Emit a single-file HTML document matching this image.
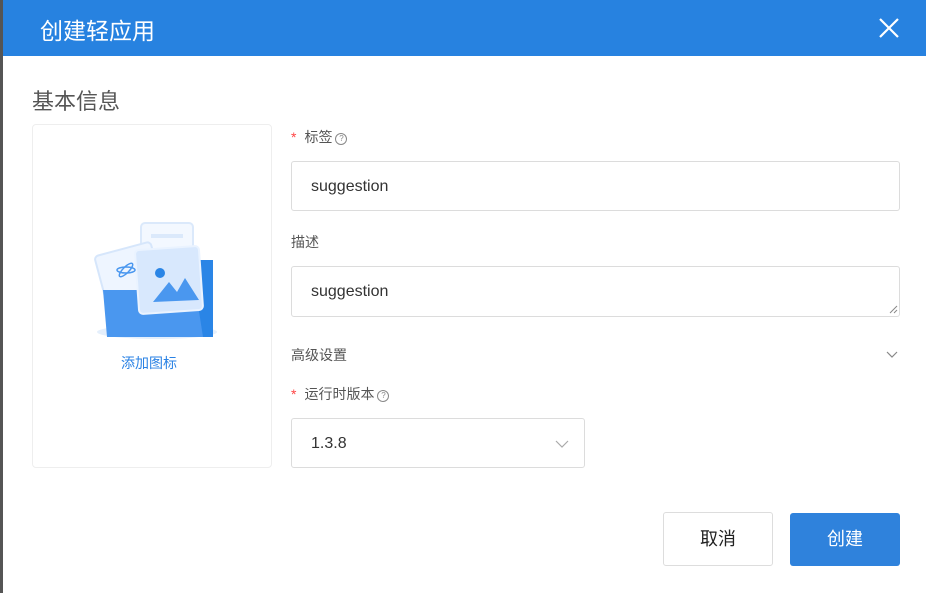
<!DOCTYPE html><html><head><meta charset="utf-8"><style>
body{margin:0;width:926px;height:593px;background:#555;position:relative;overflow:hidden;font-family:"Liberation Sans","Noto Sans CJK SC",sans-serif}
.m{position:absolute;left:3px;top:0;width:923px;height:593px;background:#fff}
.h{position:absolute;left:0;top:0;width:923px;height:56px;background:#2782e0;color:#fff;font-size:23px}
.h span{position:absolute;left:37px;top:12px}
.a{position:absolute}
.lab{font-size:14px;color:#555}
.st{color:#f44;margin-right:8px}
.q{display:inline-block;width:10px;height:10px;border:1px solid #888;border-radius:50%;font-size:8px;line-height:10px;text-align:center;color:#888;vertical-align:1px;margin-left:3px}
.in{border:1px solid #dcdcdc;border-radius:3px;font-size:16px;color:#333;box-sizing:border-box;padding-left:19px}
.btn{border-radius:3px;font-size:18px;text-align:center;box-sizing:border-box}
</style></head><body><div class="m">
<div class="h"><span>创建轻应用</span>
<svg class="a" style="left:875px;top:17px" width="22" height="22"><path d="M2 2L20 20M20 2L2 20" stroke="#fff" stroke-width="2.2"/></svg></div>
<div class="a" style="left:29px;top:84px;font-size:22px;color:#555">基本信息</div>
<div class="a" style="left:29px;top:124px;width:238px;height:342px;border:1px solid #eee;border-radius:4px"></div>
<svg class="a" style="left:88px;top:220px" width="132" height="125">
<ellipse cx="66" cy="112" rx="60" ry="7" fill="#e4effc"/>
<rect x="50" y="3" width="52" height="70" rx="4" fill="#f3f8ff" stroke="#dbe9fb" stroke-width="2"/>
<rect x="60" y="14" width="32" height="4" fill="#dbe9fb"/>
<rect x="10" y="28" width="58" height="60" rx="4" fill="#eef5ff" stroke="#d6e6fb" stroke-width="2" transform="rotate(-15 39 58)"/>
<path d="M12 70H122L118 117H16Z" fill="#4a97ef"/>
<path d="M100 40H122V117H112Z" fill="#2a85e6"/>
<rect x="46" y="28" width="64" height="64" rx="4" fill="#d8e8fd" stroke="#eaf3ff" stroke-width="2" transform="rotate(-4 78 60)"/>
<circle cx="69" cy="53" r="5" fill="#2a85e6"/>
<path d="M62 82L78 62L86 72L94 58L108 80Z" fill="#4a97ef"/>
<ellipse cx="35" cy="50" rx="9" ry="3" fill="none" stroke="#4a97ef" stroke-width="1.5"/>
<ellipse cx="35" cy="50" rx="3" ry="9" fill="none" stroke="#4a97ef" stroke-width="1.5" transform="rotate(45 35 50)"/>
</svg>
<div class="a" style="left:118px;top:353px;font-size:14px;color:#2a82e4">添加图标</div>
<div class="a lab" style="left:288px;top:127px"><span class="st">*</span>标签<span class="q">?</span></div>
<div class="a in" style="left:288px;top:161px;width:609px;height:50px;line-height:49px">suggestion</div>
<div class="a lab" style="left:288px;top:232px">描述</div>
<div class="a in" style="left:288px;top:266px;width:609px;height:51px;line-height:49px">suggestion</div>
<svg class="a" style="left:886px;top:305px" width="9" height="9"><path d="M1 8L8 1M5 8L8 5" stroke="#888"/></svg>
<div class="a lab" style="left:288px;top:345px">高级设置</div>
<svg class="a" style="left:883px;top:351px" width="12" height="8"><path d="M1 1L6 6L11 1" fill="none" stroke="#888" stroke-width="1.2"/></svg>
<div class="a lab" style="left:288px;top:384px"><span class="st">*</span>运行时版本<span class="q">?</span></div>
<div class="a in" style="left:288px;top:418px;width:294px;height:50px;line-height:49px">1.3.8</div>
<svg class="a" style="left:552px;top:440px" width="14" height="9"><path d="M1 1L7 7L13 1" fill="none" stroke="#aaa" stroke-width="1.2"/></svg>
<div class="a btn" style="left:660px;top:512px;width:110px;height:54px;border:1px solid #ddd;line-height:52px;color:#222">取消</div>
<div class="a btn" style="left:787px;top:513px;width:110px;height:53px;background:#2f82dc;line-height:53px;color:#fff">创建</div>
</div></body></html>
